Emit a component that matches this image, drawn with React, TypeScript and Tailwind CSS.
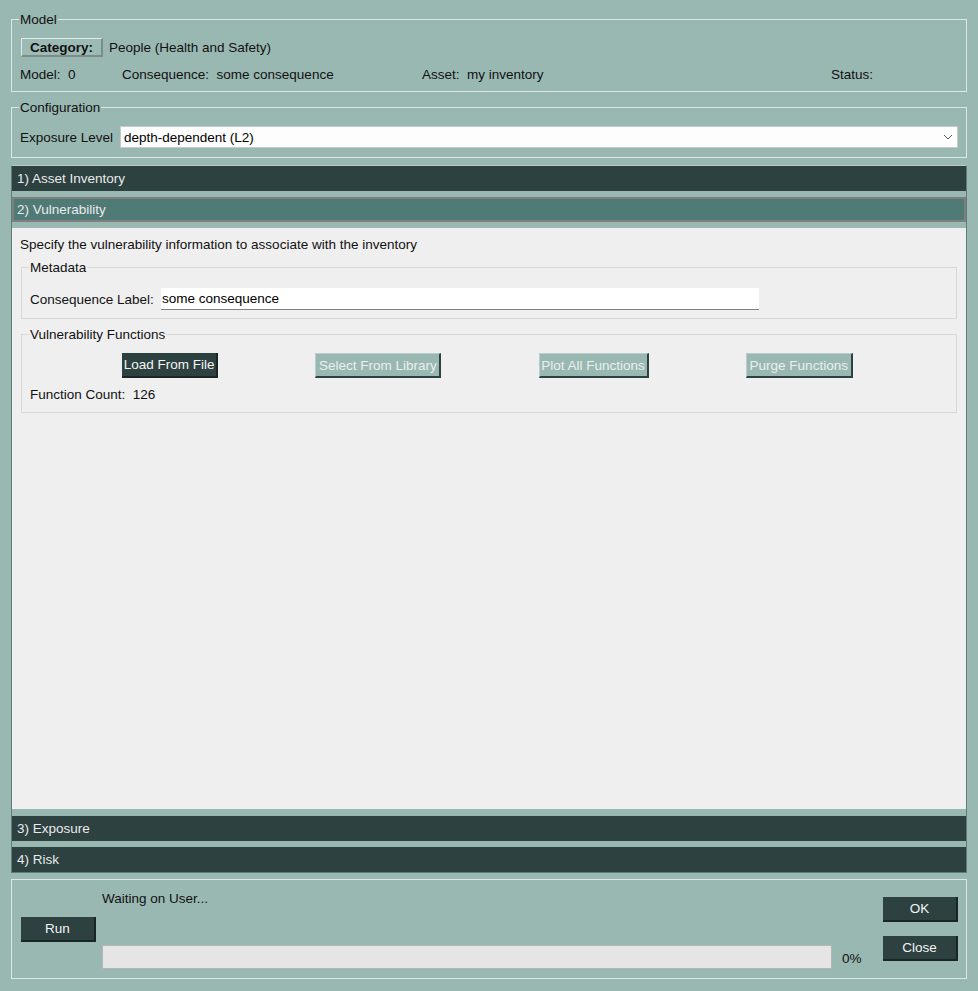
import React from "react";

const Group = ({
  title,
  line,
  className,
  bodyClass,
  children,
}: {
  title: string;
  line: string;
  className?: string;
  bodyClass?: string;
  children: React.ReactNode;
}) => (
  <div className={`flex flex-col ${className ?? ""}`}>
    <div className="flex items-start h-[15px] shrink-0">
      <div className={`w-[8px] h-[8px] mt-[7px] border-t border-l ${line}`} />
      <span className="px-[1px] leading-[15px]">{title}</span>
      <div className={`flex-1 h-[8px] mt-[7px] border-t border-r ${line}`} />
    </div>
    <div className={`flex-1 border-l border-r border-b ${line} ${bodyClass ?? ""}`}>{children}</div>
  </div>
);

const Bar = ({ label, active }: { label: string; active?: boolean }) =>
  active ? (
    <div className="h-[25px] bg-[#4f7a76] border-2 border-[#7f7f7f] pl-[3px] flex items-center text-[#eaeaea]">
      {label}
    </div>
  ) : (
    <div className="h-[25px] bg-[#2d4141] pl-[5px] flex items-center text-[#eaeaea]">{label}</div>
  );

const DisabledBtn = ({ label, w }: { label: string; w: string }) => (
  <div
    className={`${w} h-[25px] bg-[#99b8b2] text-[#e9f0ee] border-t border-l border-[#b9cdc9] border-r-2 border-b-2 border-r-[#2d4141] border-b-[#2d4141] flex items-center justify-center`}
  >
    {label}
  </div>
);

const DarkBtn = ({ label, w }: { label: string; w: string }) => (
  <div
    className={`${w} h-[25px] bg-[#2d4141] text-[#f4f4f4] border-r-2 border-b-2 border-[#1a2626] flex items-center justify-center`}
  >
    {label}
  </div>
);

export default function App() {
  return (
    <div
      className="w-[978px] h-[991px] bg-[#99b8b2] px-[11px] pt-[12px] text-[13.5px] leading-[15px] text-[#111]"
      style={{ fontFamily: '"Liberation Sans", Arial, sans-serif' }}
    >
      {/* Model */}
      <Group title="Model" line="border-[#dde7e5]" className="h-[80px]">
        <div className="pl-[9px] mt-[11px] flex items-center h-[19px]">
          <div className="h-[19px] w-[82px] bg-[#9dbbb5] border-t border-l border-[#e3ebe9] border-r-2 border-b-2 border-r-[#7c8c89] border-b-[#7c8c89] flex items-center justify-center font-bold">
            Category:
          </div>
          <span className="ml-[6px]">People (Health and Safety)</span>
        </div>
        <div className="pl-[8px] mt-[10px] flex h-[15px]">
          <div className="w-[102px]">Model:&nbsp; 0</div>
          <div className="w-[300px]">Consequence:&nbsp; some consequence</div>
          <div className="w-[409px]">Asset:&nbsp; my inventory</div>
          <div>Status:</div>
        </div>
      </Group>

      {/* Configuration */}
      <Group title="Configuration" line="border-[#dde7e5]" className="mt-[8px] h-[58px]">
        <div className="mt-[11px] pl-[8px] pr-[8px] flex items-center h-[22px]">
          <span className="w-[100px]">Exposure Level</span>
          <div className="flex-1 h-[22px] bg-[#fdfdfd] border border-[#c8c8c8] flex items-center pl-[3px] text-black">
            <span className="flex-1">depth-dependent (L2)</span>
            <svg width="10" height="6" viewBox="0 0 10 6" className="mr-[4px]">
              <polyline points="1,1 5,5 9,1" fill="none" stroke="#555" strokeWidth="1" />
            </svg>
          </div>
        </div>
      </Group>

      {/* Accordion */}
      <div className="mt-[7px] border border-[#5e7c78] border-t-[#b7cbc7] flex flex-col">
        <Bar label="1) Asset Inventory" />
        <div className="h-[6px]" />
        <Bar label="2) Vulnerability" active />
        <div className="h-[6px]" />
        <div className="h-[581px] bg-[#efefef] px-[8px] pt-[9px]">
          <div className="h-[15px]">Specify the vulnerability information to associate with the inventory</div>
          <Group title="Metadata" line="border-[#d8d8d8]" className="mt-[8px] mx-[1px] h-[59px]">
            <div className="mt-[13px] pl-[8px] flex items-center h-[22px]">
              <span className="w-[131px]">Consequence Label:</span>
              <div className="w-[598px] h-[22px] bg-white border-b border-[#808080] flex items-center pl-[1px] text-black">
                some consequence
              </div>
            </div>
          </Group>
          <Group title="Vulnerability Functions" line="border-[#d8d8d8]" className="mt-[8px] mx-[1px] h-[86px]">
            <div className="mt-[11px] pl-[3px] pr-[6px] flex justify-evenly h-[25px]">
              <DarkBtn label="Load From File" w="w-[96px]" />
              <DisabledBtn label="Select From Library" w="w-[126px]" />
              <DisabledBtn label="Plot All Functions" w="w-[110px]" />
              <DisabledBtn label="Purge Functions" w="w-[107px]" />
            </div>
            <div className="mt-[9px] pl-[8px] h-[15px]">Function Count:&nbsp; 126</div>
          </Group>
        </div>
        <div className="h-[7px]" />
        <Bar label="3) Exposure" />
        <div className="h-[6px]" />
        <Bar label="4) Risk" />
      </div>

      {/* Bottom */}
      <div className="mt-[6px] h-[100px] border border-[#dde7e5] flex">
        <div className="pl-[9px] pt-[37px]">
          <DarkBtn label="Run" w="w-[75px]" />
        </div>
        <div className="ml-[6px] pt-[11px] flex flex-col">
          <div className="h-[15px]">Waiting on User...</div>
          <div className="mt-[39px] flex items-center">
            <div className="w-[730px] h-[24px] bg-[#e5e5e5] border border-[#b5b5b5]" />
            <span className="ml-[10px] mt-[2px]">0%</span>
          </div>
        </div>
        <div className="ml-auto mr-[8px] pt-[17px] flex flex-col gap-[14px]">
          <DarkBtn label="OK" w="w-[75px]" />
          <DarkBtn label="Close" w="w-[75px]" />
        </div>
      </div>
    </div>
  );
}
